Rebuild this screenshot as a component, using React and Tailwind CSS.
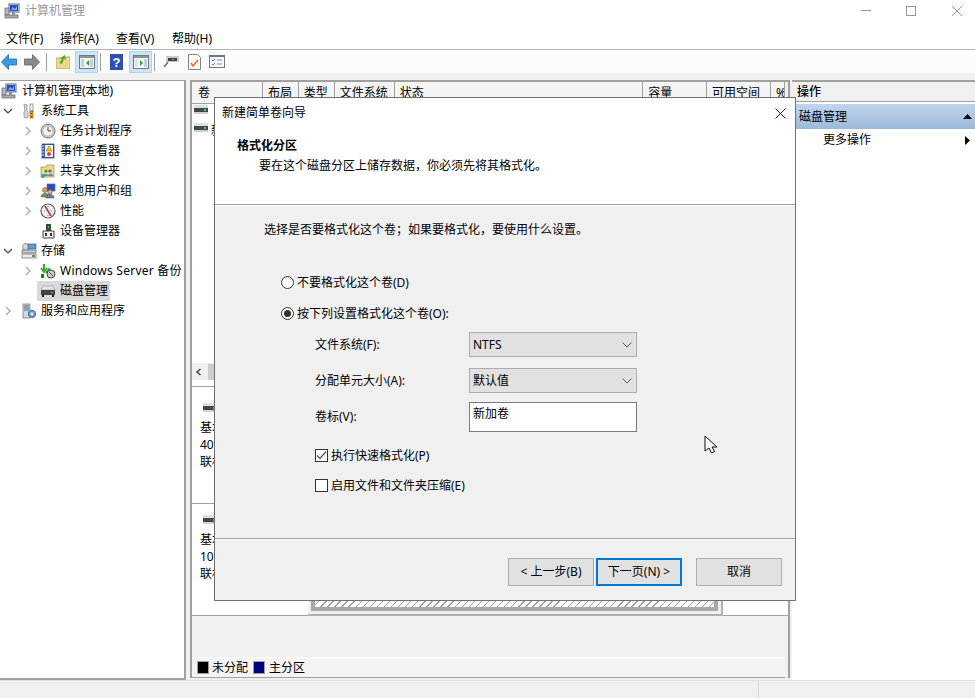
const FONT = { fontFamily: '"Noto Sans", "Noto Sans CJK SC", sans-serif' };

function Chevron({ open }) {
  if (open) {
    return (
      <svg width="10" height="10" viewBox="0 0 10 10" fill="none" stroke="#404040" strokeWidth="1.2">
        <path d="M1 3l4 4 4-4" />
      </svg>
    );
  }
  return (
    <svg width="10" height="10" viewBox="0 0 10 10" fill="none" stroke="#a6a6a6" strokeWidth="1.3">
      <path d="M3 1l4 4-4 4" />
    </svg>
  );
}

function ComputerIcon() {
  return (
    <svg width="16" height="16" viewBox="0 0 16 16">
      <rect x="5" y="1" width="10" height="8" fill="#e4e8f0" stroke="#5a6a80" />
      <rect x="6" y="2" width="8" height="6" fill="#2a4fc0" />
      <path d="M7 7l2-3 2 2 2-3v4z" fill="#7fa8ee" />
      <rect x="1" y="5" width="4" height="7" fill="#b4b8bc" stroke="#667" strokeWidth="0.7" />
      <rect x="1" y="12" width="13" height="3" fill="#a8adb2" stroke="#667" strokeWidth="0.7" />
      <rect x="8" y="9" width="3" height="3" fill="#8b9199" />
    </svg>
  );
}

function ToolsIcon() {
  return (
    <svg width="16" height="16" viewBox="0 0 16 16">
      <path d="M3 1l3 1v6l1 1v5l-1 1H4l-1-1V9l1-1z" fill="#d8dade" stroke="#80848a" strokeWidth="0.7" />
      <rect x="9" y="1" width="3" height="7" fill="#f7f7f7" stroke="#777" strokeWidth="0.7" />
      <rect x="9" y="8" width="3" height="7" fill="#e4a716" stroke="#8a6510" strokeWidth="0.7" />
      <rect x="10" y="10" width="1" height="1" fill="#333" />
      <rect x="10" y="13" width="1" height="1" fill="#333" />
    </svg>
  );
}

function ClockIcon() {
  return (
    <svg width="16" height="16" viewBox="0 0 16 16">
      <circle cx="8" cy="8" r="7" fill="#c9ced6" stroke="#6f7680" />
      <circle cx="8" cy="8" r="5" fill="#f6f3e4" stroke="#a3a8ae" strokeWidth="0.6" />
      <path d="M8 4v4h3" fill="none" stroke="#444" strokeWidth="1" />
    </svg>
  );
}

function EventIcon() {
  return (
    <svg width="16" height="16" viewBox="0 0 16 16">
      <rect x="2" y="1" width="12" height="14" fill="#3a5fa8" stroke="#23406f" strokeWidth="0.7" />
      <rect x="5" y="2" width="8" height="12" fill="#f3f3ef" />
      <path d="M9 3l3 5H6z" fill="#f3c41a" stroke="#8a6b10" strokeWidth="0.5" />
      <circle cx="9" cy="11" r="2" fill="#d6453d" />
      <path d="M2 3h2M2 6h2M2 9h2M2 12h2" stroke="#e8e8e8" />
    </svg>
  );
}

function SharedIcon() {
  return (
    <svg width="16" height="16" viewBox="0 0 16 16">
      <path d="M1 4h5l1-2h7v12H1z" fill="#f1d68e" stroke="#a88a3e" strokeWidth="0.7" />
      <circle cx="6" cy="8" r="1.6" fill="#5b8b4a" />
      <circle cx="10" cy="8" r="1.6" fill="#44689c" />
      <path d="M3 13c0-3 5-3 5 0zM8 13c0-3 5-3 5 0z" fill="#5d88b8" />
      <circle cx="3" cy="13" r="2" fill="#3fa878" />
    </svg>
  );
}

function UsersIcon() {
  return (
    <svg width="16" height="16" viewBox="0 0 16 16">
      <rect x="7" y="1" width="8" height="7" fill="#2a4fc0" stroke="#667" strokeWidth="0.7" />
      <circle cx="5" cy="7" r="2.4" fill="#d7a36a" stroke="#6b4a20" strokeWidth="0.6" />
      <path d="M1 14c0-5 8-5 8 0z" fill="#7d8f5a" stroke="#555" strokeWidth="0.5" />
      <circle cx="10" cy="9" r="2.2" fill="#e0b485" stroke="#6b4a20" strokeWidth="0.6" />
      <path d="M6 15c0-5 8-5 8 0z" fill="#5e7fae" stroke="#444" strokeWidth="0.5" />
    </svg>
  );
}

function PerfIcon() {
  return (
    <svg width="16" height="16" viewBox="0 0 16 16">
      <circle cx="8" cy="8" r="7" fill="#f2f2f2" stroke="#5c5c5c" strokeWidth="1.2" />
      <path d="M5 3l6 10" stroke="#cc2a24" strokeWidth="1.5" />
      <path d="M4 8h1M11 8h1M8 3v1M8 12v1" stroke="#777" />
    </svg>
  );
}

function DeviceIcon() {
  return (
    <svg width="16" height="16" viewBox="0 0 16 16">
      <rect x="6" y="1" width="5" height="7" fill="#3e4648" />
      <rect x="8" y="3" width="1" height="2" fill="#3bd24a" />
      <path d="M3 8h11v7H3z" fill="#f0f0f0" stroke="#444" />
      <rect x="5" y="10" width="2" height="3" fill="#333" />
      <rect x="10" y="10" width="2" height="3" fill="#333" />
    </svg>
  );
}

function StorageIcon() {
  return (
    <svg width="16" height="16" viewBox="0 0 16 16">
      <circle cx="5" cy="4" r="3.5" fill="#d4d7db" stroke="#777" strokeWidth="0.7" />
      <rect x="7" y="1" width="8" height="5" fill="#5d9bd8" stroke="#46658a" strokeWidth="0.7" />
      <rect x="1" y="7" width="14" height="3" fill="#c8ccd0" stroke="#666" strokeWidth="0.7" />
      <rect x="1" y="11" width="14" height="4" fill="#e8eaec" stroke="#666" strokeWidth="0.7" />
      <rect x="11" y="12" width="3" height="2" fill="#3aa043" />
    </svg>
  );
}

function BackupIcon() {
  return (
    <svg width="16" height="16" viewBox="0 0 16 16">
      <path d="M4 1v8M1 5l3 4 3-4" fill="none" stroke="#3aa83a" strokeWidth="2" />
      <path d="M9 15V6M6 10l3-4 3 4" fill="none" stroke="#3aa83a" strokeWidth="2" />
      <circle cx="11" cy="11" r="4" fill="#c9ccd0" stroke="#444" />
      <path d="M9 9l4 4" stroke="#b83a30" />
      <rect x="1" y="11" width="3" height="4" fill="#2c6e2c" />
    </svg>
  );
}

function DiskIcon() {
  return (
    <svg width="16" height="16" viewBox="0 0 16 16">
      <path d="M3 3h10l2 4H1z" fill="#e4e4e4" stroke="#9a9a9a" strokeWidth="0.6" />
      <rect x="1" y="7" width="14" height="5" fill="#3f4446" />
      <rect x="11" y="9" width="2" height="1" fill="#42d24a" />
      <path d="M2 12h2v2H2zM12 12h2v2h-2z" fill="#222" />
    </svg>
  );
}

function ServicesIcon() {
  return (
    <svg width="16" height="16" viewBox="0 0 16 16">
      <rect x="2" y="1" width="7" height="14" fill="#d4d8dc" stroke="#6a7076" strokeWidth="0.7" />
      <path d="M3 3h5M3 5h5M3 7h5" stroke="#54606c" />
      <circle cx="11" cy="11" r="3.6" fill="#6f9fd0" stroke="#3d6a9c" />
      <circle cx="11" cy="11" r="1.4" fill="#f0f4f8" />
    </svg>
  );
}

function SmallDisk() {
  return (
    <svg width="14" height="10" viewBox="0 0 14 10">
      <rect x="0" y="0" width="14" height="3" fill="#e0e0e0" />
      <rect x="0" y="3" width="14" height="4" fill="#42474a" />
      <rect x="10" y="4" width="2" height="2" fill="#3fdc4c" />
      <rect x="0" y="7" width="14" height="2" fill="#cfcfcf" />
    </svg>
  );
}

const TREE = [
  { level: 0, label: '计算机管理(本地)', icon: <ComputerIcon /> },
  { level: 1, label: '系统工具', icon: <ToolsIcon />, chevron: 'open' },
  { level: 2, label: '任务计划程序', icon: <ClockIcon />, chevron: 'closed' },
  { level: 2, label: '事件查看器', icon: <EventIcon />, chevron: 'closed' },
  { level: 2, label: '共享文件夹', icon: <SharedIcon />, chevron: 'closed' },
  { level: 2, label: '本地用户和组', icon: <UsersIcon />, chevron: 'closed' },
  { level: 2, label: '性能', icon: <PerfIcon />, chevron: 'closed' },
  { level: 2, label: '设备管理器', icon: <DeviceIcon /> },
  { level: 1, label: '存储', icon: <StorageIcon />, chevron: 'open' },
  { level: 2, label: 'Windows Server 备份', icon: <BackupIcon />, chevron: 'closed', wide: true },
  { level: 2, label: '磁盘管理', icon: <DiskIcon />, selected: true },
  { level: 1, label: '服务和应用程序', icon: <ServicesIcon />, chevron: 'closed' },
];

const COLUMNS = [
  { label: '卷', w: 'w-[70px]' },
  { label: '布局', w: 'w-[36px]' },
  { label: '类型', w: 'w-[36px]' },
  { label: '文件系统', w: 'w-[60px]' },
  { label: '状态', w: 'w-[249px]' },
  { label: '容量', w: 'w-[64px]' },
  { label: '可用空间', w: 'w-[64px]' },
  { label: '%', w: 'w-[14px]' },
];

function TreeRow({ row }) {
  const indent = row.level === 2 ? 'ml-[5px]' : row.level === 1 ? 'ml-[6px]' : 'ml-[1px]';
  return (
    <div className="flex h-5 items-center">
      {row.level > 0 && <div className={row.level === 1 ? 'w-[1px]' : 'w-[21px]'} />}
      {row.level > 0 && (
        <div className="flex w-[14px] justify-center">
          {row.chevron && <Chevron open={row.chevron === 'open'} />}
        </div>
      )}
      <div className={`flex h-5 items-center ${row.selected ? 'ml-[2px] bg-[#d9d9d9] pl-[3px] pr-[2px]' : indent}`}>
        <div className="flex h-4 w-4 shrink-0 items-center">{row.icon}</div>
        <span className={`ml-[4px] whitespace-nowrap text-xs ${row.wide ? 'tracking-[0.25px]' : ''} ${row.level === 0 ? 'pl-[1px]' : ''}`}>
          {row.label}
        </span>
      </div>
    </div>
  );
}

function ToolButton({ active, children }) {
  return (
    <div className={`flex h-[22px] w-[23px] items-center justify-center ${active ? 'border border-[#a8d4f5] bg-[#cde6f7]' : ''}`}>
      {children}
    </div>
  );
}

function PaneIcon({ right }) {
  return (
    <svg width="16" height="14" viewBox="0 0 16 14">
      <rect x="0.5" y="0.5" width="15" height="13" fill="#f5f5f5" stroke="#6f7a80" />
      <rect x="1" y="1" width="14" height="2" fill="#8a969c" />
      <rect x="2" y="4" width="3" height="8" fill={right ? '#dfe6d8' : '#c9ced2'} />
      <rect x="11" y="4" width="3" height="8" fill="#c9ced2" />
      {right ? <path d="M7 5l3 3-3 3z" fill="#2fa43a" /> : <path d="M10 5L7 8l3 3z" fill="#2fa43a" />}
    </svg>
  );
}

function Toolbar() {
  return (
    <div className="flex h-[24px] items-center border-b border-[#f0f0f0] bg-[#fcfcfc] pl-[1px]">
      <svg width="16" height="16" viewBox="0 0 16 16">
        <path d="M7.5 0.5L0.5 8l7 7.5V11h8V5h-8z" fill="#3d9be6" stroke="#1d6cb0" strokeWidth="0.8" />
      </svg>
      <svg className="ml-[7px]" width="16" height="16" viewBox="0 0 16 16">
        <path d="M8.5 0.5l7 7.5-7 7.5V11h-8V5h8z" fill="#8a8a8a" stroke="#666" strokeWidth="0.8" />
      </svg>
      <div className="ml-[6px] h-[18px] w-px bg-[#a0a0a0]" />
      <svg className="ml-[9px]" width="14" height="15" viewBox="0 0 14 15">
        <path d="M0 4h6l1-1h7v12H0z" fill="#f1d68e" stroke="#b0924a" strokeWidth="0.7" />
        <path d="M3 9l3-4-2-1 5-3 1 5-2-1-2 5z" fill="#5aae32" />
      </svg>
      <div className="ml-[5px]">
        <ToolButton active><PaneIcon /></ToolButton>
      </div>
      <div className="ml-[2px] h-[18px] w-px bg-[#a0a0a0]" />
      <svg className="ml-[9px]" width="13" height="16" viewBox="0 0 13 16">
        <rect width="13" height="16" fill="#2f4fb0" />
        <text x="6.5" y="13" textAnchor="middle" fontSize="13" fontWeight="700" fill="#fff" fontFamily="Liberation Sans">?</text>
      </svg>
      <div className="ml-[6px]">
        <ToolButton active><PaneIcon right /></ToolButton>
      </div>
      <div className="ml-[2px] h-[18px] w-px bg-[#a0a0a0]" />
      <svg className="ml-[8px]" width="16" height="15" viewBox="0 0 16 15">
        <path d="M3 2h13v6H3z" fill="#c9ccce" />
        <rect x="5" y="4" width="9" height="3" fill="#444" />
        <rect x="9" y="5" width="2" height="1" fill="#41d84a" />
        <path d="M5 8l-4 5" stroke="#70757a" strokeWidth="1.6" />
      </svg>
      <svg className="ml-[9px]" width="13" height="16" viewBox="0 0 13 16">
        <path d="M0.5 0.5h9l3 3v12H0.5z" fill="#fafafa" stroke="#80858a" />
        <path d="M3 9l2 3 5-6" fill="none" stroke="#e0702a" strokeWidth="1.5" />
      </svg>
      <svg className="ml-[8px]" width="16" height="13" viewBox="0 0 16 13">
        <rect x="0.5" y="0.5" width="15" height="12" fill="#f6f6f6" stroke="#6f7a80" />
        <rect x="1" y="1" width="14" height="1" fill="#6f7a80" />
        <path d="M3 5l1 1 2-2M3 9l1 1 2-2" fill="none" stroke="#3d8fd8" />
        <path d="M8 5h5M8 9h5" stroke="#8a9096" />
      </svg>
    </div>
  );
}

function DiskRow({ size, h, pad }) {
  return (
    <div className={`flex border-b border-[#a0a0a0] bg-white ${h}`}>
      <div className={`w-[116px] pl-[8px] text-xs ${pad}`}>
        <div className="ml-[3px] flex h-[10px]"><SmallDisk /></div>
        <div className="mt-[6px] flex h-[18px] items-center">基本</div>
        <div className="flex h-[16px] items-center">{size}</div>
        <div className="flex h-[18px] items-center">联机</div>
      </div>
    </div>
  );
}

function CenterPane() {
  return (
    <div className="flex h-[598px] w-[600px] flex-col border-x-2 border-t-2 border-[#a0a0a0] bg-[#f0f0f0]">
      <div className="mr-[3px] flex h-[22px] border-b border-[#a0a0a0] bg-[#f4f4f4] pl-px">
        {COLUMNS.map((c) => (
          <div key={c.label} className={`flex items-center overflow-hidden border-r border-[#a0a0a0] pl-[5px] text-xs ${c.w}`}>
            {c.label}
          </div>
        ))}
      </div>
      <div className="h-[259px] bg-white pl-[2px] pt-[1px]">
        <div className="h-[18px]"><SmallDisk /></div>
        <div className="flex h-[18px] items-start">
          <SmallDisk />
          <div className="ml-[3px] w-[14px] overflow-hidden whitespace-nowrap text-xs">新</div>
        </div>
      </div>
      <div className="flex h-[17px] items-center bg-[#f0f0f0]">
        <svg className="ml-[3px]" width="8" height="8" viewBox="0 0 8 8" fill="none" stroke="#444" strokeWidth="1.6">
          <path d="M5.5 1L2 4l3.5 3" />
        </svg>
        <div className="ml-[5px] h-[16px] w-[200px] bg-[#cdcdcd]" />
      </div>
      <div className="h-[7px] border-b border-[#a0a0a0] bg-white" />
      <DiskRow size="40.00 GB" h="h-[117px]" pad="pt-[16px]" />
      <div className="relative">
        <DiskRow size="100 GB" h="h-[112px]" pad="pt-[11px]" />
        <div className="absolute bottom-0 left-[116px] top-0 w-[415px] border-b-2 border-r-2 border-[#b0b0b0] bg-[#f0f0f0] p-[3px]">
          <div className="h-full border-4 border-t-0 border-[#a8a8a8] bg-[repeating-linear-gradient(135deg,#ffffff_0,#ffffff_4px,#a0a0a0_4px,#a0a0a0_5px)]" />
        </div>
      </div>
      <div className="flex-1" />
      <div className="mr-[3px] flex h-[21px] items-center border-y border-b-[#a0a0a0] border-t-white bg-[#f4f4f4] pl-[5px] text-xs">
        <div className="h-[13px] w-[12px] border border-[#a0a0a0] bg-black" />
        <span className="ml-[3px]">未分配</span>
        <div className="ml-[5px] h-[13px] w-[12px] border border-[#a0a0a0] bg-[#000080]" />
        <span className="ml-[4px]">主分区</span>
      </div>
    </div>
  );
}

function ActionPane() {
  return (
    <div className="ml-[2px] flex flex-1 flex-col border-t-2 border-[#a0a0a0] bg-white">
      <div className="flex h-5 items-center border-b border-[#a0a0a0] bg-[#f0f0f0] pl-[5px] text-xs font-medium">操作</div>
      <div className="mt-[2px] flex h-[25px] items-center justify-between bg-gradient-to-b from-[#bfd5ec] to-[#9cb9d9] pl-[7px] pr-[3px] text-xs">
        <span>磁盘管理</span>
        <svg width="9" height="5" viewBox="0 0 9 5"><path d="M4.5 0L9 5H0z" fill="#000" /></svg>
      </div>
      <div className="flex h-[22px] items-center justify-between pl-[31px] pr-[5px] text-xs">
        <span>更多操作</span>
        <svg width="5" height="9" viewBox="0 0 5 9"><path d="M0 0l5 4.5L0 9z" fill="#000" /></svg>
      </div>
    </div>
  );
}

function Radio({ checked, label }) {
  return (
    <div className="flex h-5 items-center pl-[66px] text-xs">
      <div className="flex h-[13px] w-[13px] items-center justify-center rounded-full border border-[#333] bg-white">
        {checked && <div className="h-[7px] w-[7px] rounded-full bg-[#333]" />}
      </div>
      <span className="ml-[3px] pt-[2px]">{label}</span>
    </div>
  );
}

function FieldSelect({ label, value }) {
  return (
    <div className="flex h-[25px] items-center pl-[100px] text-xs">
      <span className="w-[154px]">{label}</span>
      <div className="flex h-[25px] w-[168px] items-center justify-between border border-[#adadad] bg-[#e1e1e1] pl-[3px] pr-[4px]">
        <span>{value}</span>
        <svg width="10" height="6" viewBox="0 0 10 6" fill="none" stroke="#555" strokeWidth="1"><path d="M0.5 0.5L5 5l4.5-4.5" /></svg>
      </div>
    </div>
  );
}

function Check({ checked, label }) {
  return (
    <div className="flex h-5 items-center pl-[100px] text-xs">
      <div className="flex h-[13px] w-[13px] items-center justify-center border border-[#333] bg-white">
        {checked && (
          <svg width="11" height="11" viewBox="0 0 11 11" fill="none" stroke="#555" strokeWidth="1.3"><path d="M1 5.5l3 3 6-7" /></svg>
        )}
      </div>
      <span className="ml-[3px] pt-[2px]">{label}</span>
    </div>
  );
}

function WizardDialog() {
  return (
    <div className="absolute left-[214px] top-[97px] flex h-[504px] w-[582px] flex-col border border-[#707070] bg-[#f0f0f0]">
      <div className="h-[107px] border-b border-[#a0a0a0] bg-white">
        <div className="flex h-[30px] items-center justify-between pl-[7px] pr-[9px] text-xs">
          <span>新建简单卷向导</span>
          <svg width="11" height="11" viewBox="0 0 11 11" fill="none" stroke="#222" strokeWidth="1"><path d="M0.5 0.5l10 10M10.5 0.5l-10 10" /></svg>
        </div>
        <div className="mt-[8px] flex h-5 items-center pl-[22px] text-xs font-bold">格式化分区</div>
        <div className="flex h-[19px] items-center pl-[44px] text-xs">要在这个磁盘分区上储存数据，你必须先将其格式化。</div>
      </div>
      <div className="h-px bg-white" />
      <div className="mt-[13px] flex h-5 items-center pl-[49px] pt-[2px] text-xs">选择是否要格式化这个卷；如果要格式化，要使用什么设置。</div>
      <div className="mt-[33px]"><Radio label="不要格式化这个卷(D)" /></div>
      <div className="mt-[11px]"><Radio checked label="按下列设置格式化这个卷(O):" /></div>
      <div className="mt-[9px]"><FieldSelect label="文件系统(F):" value="NTFS" /></div>
      <div className="mt-[11px]"><FieldSelect label="分配单元大小(A):" value="默认值" /></div>
      <div className="mt-[9px] flex h-[30px] items-center pl-[100px] text-xs">
        <span className="w-[154px]">卷标(V):</span>
        <div className="h-[30px] w-[168px] border border-[#7a7a7a] bg-white pl-[3px] pt-[3px]">新加卷</div>
      </div>
      <div className="mt-[13px]"><Check checked label="执行快速格式化(P)" /></div>
      <div className="mt-[10px]"><Check label="启用文件和文件夹压缩(E)" /></div>
      <div className="mt-auto flex h-[62px] items-start justify-end border-t border-[#a0a0a0] pr-[13px] pt-[19px] text-xs shadow-[inset_0_1px_0_#ffffff]">
        <button className="h-[28px] w-[86px] border border-[#adadad] bg-[#e1e1e1]">&lt; 上一步(B)</button>
        <button className="ml-[2px] h-[28px] w-[86px] border-2 border-[#0078d7] bg-[#e1e1e1]">下一页(N) &gt;</button>
        <button className="ml-[14px] h-[28px] w-[86px] border border-[#adadad] bg-[#e1e1e1]">取消</button>
      </div>
    </div>
  );
}

export default function App() {
  return (
    <div className="relative flex h-[698px] w-[975px] flex-col overflow-hidden bg-[#f0f0f0] text-black" style={FONT}>
      <div className="flex h-[27px] items-center justify-between bg-white pb-[6px] pl-[4px] text-xs text-[#999]">
        <div className="flex items-center">
          <ComputerIcon />
          <span className="ml-[5px]">计算机管理</span>
        </div>
        <div className="flex items-center pr-[13px]">
          <div className="h-px w-[10px] bg-[#999]" />
          <div className="ml-[35px] h-[10px] w-[10px] border border-[#999]" />
          <svg className="ml-[36px]" width="10" height="10" viewBox="0 0 10 10" fill="none" stroke="#999"><path d="M0 0l10 10M10 0L0 10" /></svg>
        </div>
      </div>
      <div className="flex h-[23px] items-center border-b border-[#b4b4b4] bg-white pl-[6px] pt-[1px] text-xs">
        <span className="w-[54px]">文件(F)</span>
        <span className="w-[56px]">操作(A)</span>
        <span className="w-[56px]">查看(V)</span>
        <span>帮助(H)</span>
      </div>
      <Toolbar />
      <div className="flex h-[606px] pt-[6px]">
        <div className="h-[600px] w-[186px] overflow-hidden border-b-2 border-r-2 border-t border-[#a0a0a0] bg-white">
          {TREE.map((row) => <TreeRow key={row.label} row={row} />)}
        </div>
        <div className="ml-[4px]"><CenterPane /></div>
        <ActionPane />
      </div>
      <div className="flex flex-1 border-t border-[#e0e0e0]">
        <div className="w-[759px] border-r border-[#d8d8d8]" />
      </div>
      <WizardDialog />
      <svg className="absolute left-[704px] top-[435px]" width="14" height="20" viewBox="0 0 14 20">
        <path d="M1 1v15l4-3 2.5 5 3-1.5-2.5-4.5h5z" fill="#f7f7f7" stroke="#111" strokeWidth="1" />
      </svg>
    </div>
  );
}
